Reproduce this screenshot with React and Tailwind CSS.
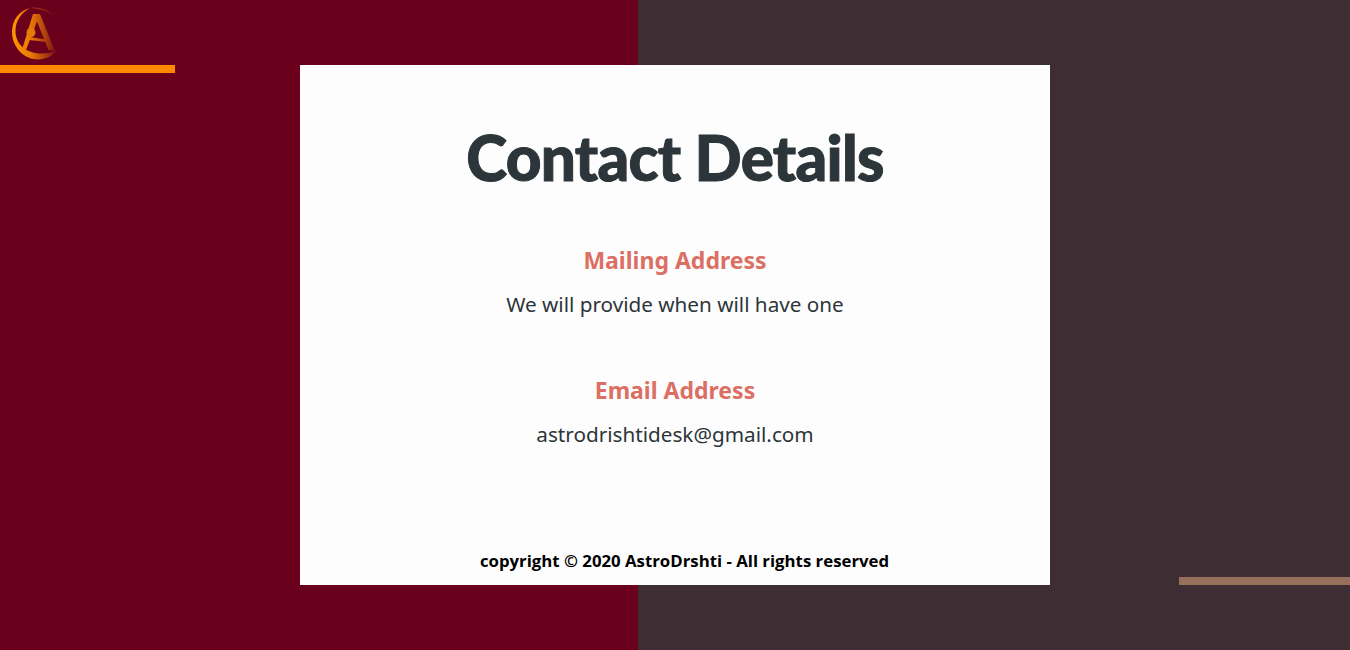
import React from 'react';

const Logo = () => (
  <svg className="h-[64px] w-[64px]" viewBox="0 0 64 64" fill="none" xmlns="http://www.w3.org/2000/svg">
    <defs>
      <linearGradient id="logoGrad" x1="12" y1="0" x2="58" y2="0" gradientUnits="userSpaceOnUse">
        <stop offset="0" stopColor="#ff9400" />
        <stop offset="0.4" stopColor="#e97a04" />
        <stop offset="0.75" stopColor="#a83c0e" />
        <stop offset="1" stopColor="#6b001c" />
      </linearGradient>
    </defs>
    {/* crescent ring */}
    <path
      d="M30 8C18 11 12 21 12 32C12 47 24 59.500 38 59.500C46 59.500 53 56 58 49C52 53 46 54 40 53.500C26 53 15.500 44 15.500 31C15.500 21 21 13 30 8Z"
      fill="url(#logoGrad)"
    />
    <path d="M30 8C38 6.500 48 9 55 16C47 11 38 8.500 30 8Z" fill="url(#logoGrad)" opacity="0.45" />
    {/* letter A */}
    <path d="M33 14H40L55 51L48.500 50L37 21.500L26 50L22.500 48Z" fill="url(#logoGrad)" />
    <path d="M30 37L46 39.500L47 42L29 40Z" fill="url(#logoGrad)" />
    <circle cx="31" cy="32.500" r="4.500" fill="#e47a08" />
  </svg>
);

const ContactBlock = ({ title, value }) => (
  <div className="text-center">
    <h2 className="text-[23px] leading-[32px] font-bold text-[#dc6f64] font-['Noto_Sans',sans-serif]">{title}</h2>
    <p className="mt-[14px] text-[20.7px] leading-[28px] text-[#2c3539] font-['Noto_Sans',sans-serif]">{value}</p>
  </div>
);

const App = () => {
  return (
    <div className="flex h-[650px] w-full overflow-hidden bg-[linear-gradient(to_right,#6a001c_638px,#3e2e33_638px)]">
      <div className="flex h-[585px] w-[300px] flex-col">
        <div className="h-[65px]">
          <Logo />
        </div>
        <div className="h-[8px] w-[175px] bg-[#ff8800]" />
      </div>

      <main className="mt-[65px] flex h-[520px] w-[750px] flex-col items-center bg-[#fdfdfd]">
        <h1 className="mt-[56px] text-[62px] leading-[72px] font-black tracking-[-0.7px] text-[#2c3539] [-webkit-text-stroke:1px_#2c3539] font-['Lato',sans-serif]">
          Contact Details
        </h1>
        <div className="mt-[51px] flex flex-col gap-[56px]">
          <ContactBlock title="Mailing Address" value="We will provide when will have one" />
          <ContactBlock title="Email Address" value="astrodrishtidesk@gmail.com" />
        </div>
        <footer className="mt-auto mb-[12px] pl-[19px] text-[16.8px] leading-[24px] font-bold text-black font-['Open_Sans',sans-serif]">
          copyright © 2020 AstroDrshti - All rights reserved
        </footer>
      </main>

      <div className="flex h-[585px] flex-1 flex-col items-end justify-end">
        <div className="h-[8px] w-[171px] bg-[#976f5b]" />
      </div>
    </div>
  );
};

export default App;
